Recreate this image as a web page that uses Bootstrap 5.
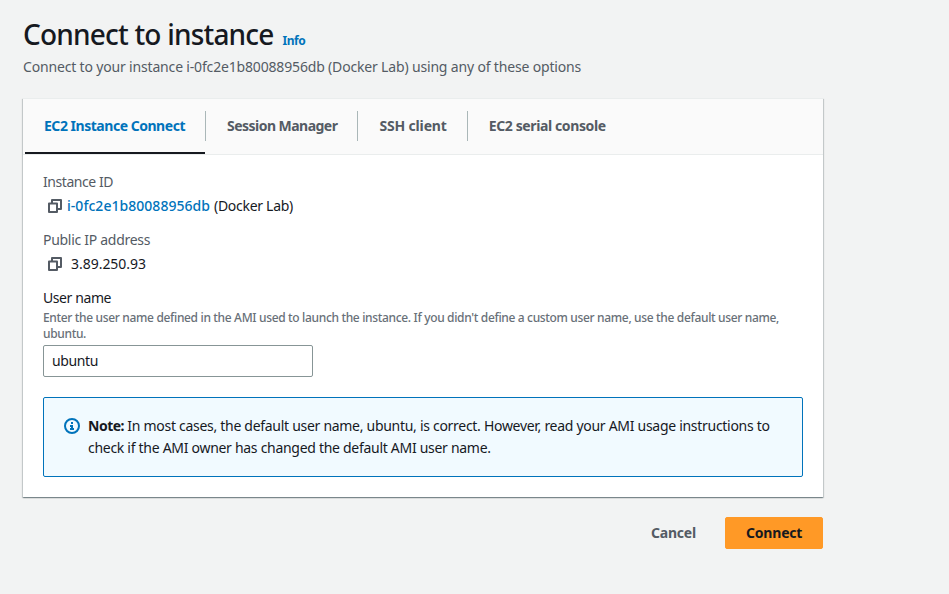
<!DOCTYPE html>
<html lang="en">
<head>
<meta charset="utf-8">
<meta name="viewport" content="width=device-width, initial-scale=1">
<title>Connect to instance</title>
<link href="https://cdn.jsdelivr.net/npm/bootstrap@5.3.0/dist/css/bootstrap.min.css" rel="stylesheet">
<style>
body{background:#f2f3f3;font:14px/22px "Noto Sans",sans-serif;color:#16191f;letter-spacing:-.29px}
.page{width:800px;margin-left:23px;padding-top:15px}
h1{font-size:28px;line-height:38px;font-weight:500;letter-spacing:-.8px}
.info{font-size:12px;font-weight:700;letter-spacing:-.5px;color:#0073bb;margin-left:9px}
.intro{color:#545b64;letter-spacing:-.169px;margin-top:3px}
.panel{margin-top:20px;height:399px;border:0;border-radius:0;box-shadow:0 1px 1px 0 rgba(0,28,36,.3),1px 1px 1px 0 rgba(0,28,36,.15),-1px 1px 1px 0 rgba(0,28,36,.15);border-top:1px solid #eaeded}
.panel .nav{background:#fafafa;height:56px;border-bottom:1px solid #eaeded;padding-left:2px}
.panel .nav-item{display:flex;align-items:center;height:55px}
.panel .nav-item+.nav-item::before{content:"";width:1px;height:30px;margin-bottom:2px;background:#aab7b8}
.panel .nav-link{padding:0 20px 2px 21px;line-height:53px;color:#545b64;font-weight:700}
.panel .nav-link.active{padding:0 20px 2px 19px;color:#0073bb;box-shadow:inset 0 -2px #16191f;width:180px}
.t-connect{letter-spacing:-.472px}.t-session{letter-spacing:-.53px}.t-ssh{letter-spacing:-.16px}.t-serial{letter-spacing:-.38px}
.panel .card-body{padding:16px 20px 20px}
.panel dt{font-weight:400;color:#545b64;line-height:22px;margin-bottom:2px}
.panel dd{margin-bottom:12px;line-height:22px;padding-left:5px}
.copy{width:14px;height:14px;flex:none}
.inst-id{letter-spacing:-.445px}
.lnk{color:#0073bb;text-decoration:none;font-weight:500;letter-spacing:.036px;margin-left:5px}
.ip{letter-spacing:-.03px;margin-left:9px}
.fld-label{line-height:22px;letter-spacing:-.41px}
.panel .form-text{font-size:12px;line-height:16px;color:#687078;margin:0;padding-top:1px;font-weight:500;letter-spacing:-.341px}
.panel .form-control{width:270px;height:32px;margin-top:3px;padding:0 8px 2px;font-size:14px;border:1px solid #879596;border-radius:2px;color:#16191f;letter-spacing:-.38px}
.panel .alert{margin:20px 0 0;height:80px;padding:17px 20px;border:1px solid #0073bb;border-radius:2px;background:#f1faff;color:#16191f}
.note-label{letter-spacing:-.5px}
.note-icon{width:16px;height:16px;margin:3px 8px 0 0;flex:none}
.actions{margin-top:20px}
.actions .btn{height:32px;padding:0 20px;border:1px solid transparent;border-radius:2px;font-size:14px;line-height:30px;font-weight:700;letter-spacing:-.2px;color:#545b64}
.actions .btn-go{background:#ff9926;border-color:#ff9926;color:#16191f;width:98px}
</style>
</head>
<body>
<main class="page">
  <div class="d-flex align-items-baseline">
    <h1 class="m-0">Connect to instance</h1>
    <a href="#" class="info text-decoration-none">Info</a>
  </div>
  <p class="intro mb-0">Connect to your instance i-0fc2e1b80088956db (Docker Lab) using any of these options</p>

  <section class="card panel">
    <ul class="nav">
      <li class="nav-item"><a class="nav-link active t-connect" href="#">EC2 Instance Connect</a></li>
      <li class="nav-item"><a class="nav-link t-session" href="#">Session Manager</a></li>
      <li class="nav-item"><a class="nav-link t-ssh" href="#">SSH client</a></li>
      <li class="nav-item"><a class="nav-link t-serial" href="#">EC2 serial console</a></li>
    </ul>
    <div class="card-body">
      <dl class="m-0">
        <dt class="inst-id">Instance ID</dt>
        <dd class="d-flex align-items-center">
          <svg class="copy" viewBox="0 0 14 14" fill="none" stroke="#545b64" stroke-width="2" stroke-linejoin="round"><path d="M1 4.5h8V13H1zM4 4.5V1h9v9H9"/></svg>
          <a class="lnk" href="#">i-0fc2e1b80088956db</a><span class="ms-1">(Docker Lab)</span>
        </dd>
        <dt>Public IP address</dt>
        <dd class="d-flex align-items-center">
          <svg class="copy" viewBox="0 0 14 14" fill="none" stroke="#545b64" stroke-width="2" stroke-linejoin="round"><path d="M1 4.5h8V13H1zM4 4.5V1h9v9H9"/></svg>
          <span class="ip">3.89.250.93</span>
        </dd>
      </dl>
      <label class="fld-label d-block" for="user">User name</label>
      <div class="form-text">Enter the user name defined in the AMI used to launch the instance. If you didn't define a custom user name, use the default user name, ubuntu.</div>
      <input id="user" class="form-control" type="text" value="ubuntu">
      <div class="alert d-flex" role="alert">
        <svg class="note-icon" viewBox="0 0 16 16" fill="none" stroke="#0073bb" stroke-width="2"><circle cx="8" cy="8" r="7"/><path d="M8 4v2M6 8h2v3M6 11h4"/></svg>
        <div><b class="note-label">Note:</b> In most cases, the default user name, ubuntu, is correct. However, read your AMI usage instructions to check if the AMI owner has changed the default AMI user name.</div>
      </div>
    </div>
  </section>

  <div class="actions d-flex justify-content-end gap-2">
    <button class="btn" type="button">Cancel</button>
    <button class="btn btn-go" type="button">Connect</button>
  </div>
</main>
<script src="https://cdn.jsdelivr.net/npm/bootstrap@5.3.0/dist/js/bootstrap.bundle.min.js"></script>
</body>
</html>
